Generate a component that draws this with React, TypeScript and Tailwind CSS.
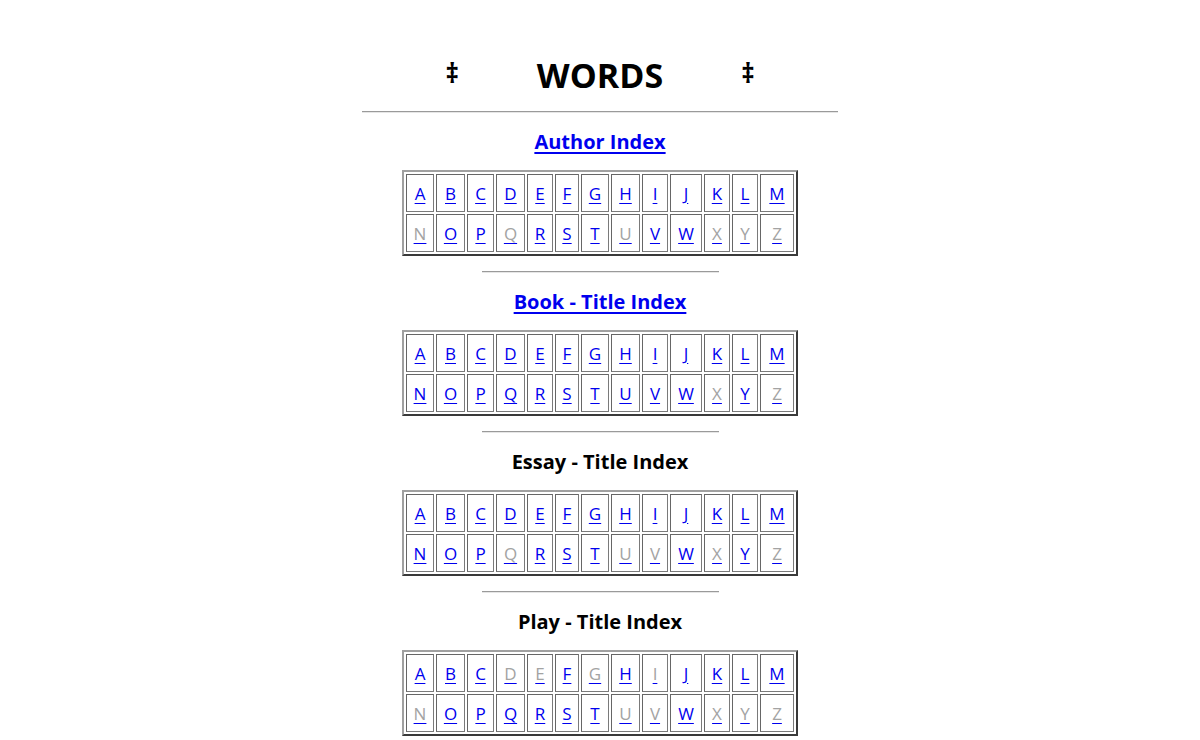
import React from 'react';

const ROWS = ['ABCDEFGHIJKLM', 'NOPQRSTUVWXYZ'];

// column widths read off the reference (each column fits its widest letter)
const COLS = [
  'w-[28px]', 'w-[29px]', 'w-[27px]', 'w-[29px]', 'w-[26px]', 'w-[24px]', 'w-[28px]',
  'w-[29px]', 'w-[26px]', 'w-[32px]', 'w-[26px]', 'w-[26px]', 'w-[34px]'
];

const SECTIONS = [
  { title: 'Author Index', link: true, off: 'NQUXYZ' },
  { title: 'Book - Title Index', link: true, off: 'XZ' },
  { title: 'Essay - Title Index', link: false, off: 'QUVXZ' },
  { title: 'Play - Title Index', link: false, off: 'DEGINUVXYZ' }
];

function Rule({ wide }: { wide?: boolean }) {
  return (
    <div
      className={
        (wide ? 'w-[476px] ' : 'w-[237px] ') +
        'h-[2px] border-t border-t-[#9a9a9a] border-b border-b-[#e6e6e6]'
      }
    />
  );
}

function LetterTable({ off }: { off: string }) {
  return (
    <div className="flex flex-col gap-[2px] p-[2px] border-2 border-t-[#a0a0a0] border-l-[#a0a0a0] border-r-[#3a3a3a] border-b-[#3a3a3a]">
      {ROWS.map((row) => (
        <div key={row} className="flex gap-[2px]">
          {row.split('').map((ch, i) => (
            <div
              key={ch}
              className={
                COLS[i] +
                ' h-[38px] flex items-center justify-center border border-t-[#666] border-l-[#666] border-r-[#7a7a7a] border-b-[#7a7a7a]'
              }
            >
              <a
                href="#"
                className={
                  'text-[17px] leading-[21px] underline decoration-[#0000ee] underline-offset-[3px] ' +
                  (off.includes(ch) ? 'text-[#a3a3a3]' : 'text-[#0000ee]')
                }
              >
                {ch}
              </a>
            </div>
          ))}
        </div>
      ))}
    </div>
  );
}

export default function App() {
  return (
    <div className="min-h-[740px] bg-white text-black font-['Open_Sans','Noto_Sans',sans-serif] pt-[55px] flex flex-col items-center">
      <div className="h-[40px] flex items-center gap-[78px]">
        <span className="text-[26px] font-bold leading-[40px] pb-[4px]">‡</span>
        <h1 className="text-[34px] font-bold leading-[40px]">WORDS</h1>
        <span className="text-[26px] font-bold leading-[40px] pb-[4px]">‡</span>
      </div>
      <div className="mt-[16px]">
        <Rule wide />
      </div>

      {SECTIONS.map((s, i) => (
        <div key={s.title} className="flex flex-col items-center">
          {i > 0 && (
            <div className="mt-[15px]">
              <Rule />
            </div>
          )}
          <div className="mt-[15px] h-[28px] flex items-center">
            {s.link ? (
              <a href="#" className="text-[20px] font-bold text-[#0000ee] underline underline-offset-[3px] leading-[28px]">
                {s.title}
              </a>
            ) : (
              <h3 className="text-[20px] font-bold leading-[28px]">{s.title}</h3>
            )}
          </div>
          <div className="mt-[14px]">
            <LetterTable off={s.off} />
          </div>
        </div>
      ))}
    </div>
  );
}
